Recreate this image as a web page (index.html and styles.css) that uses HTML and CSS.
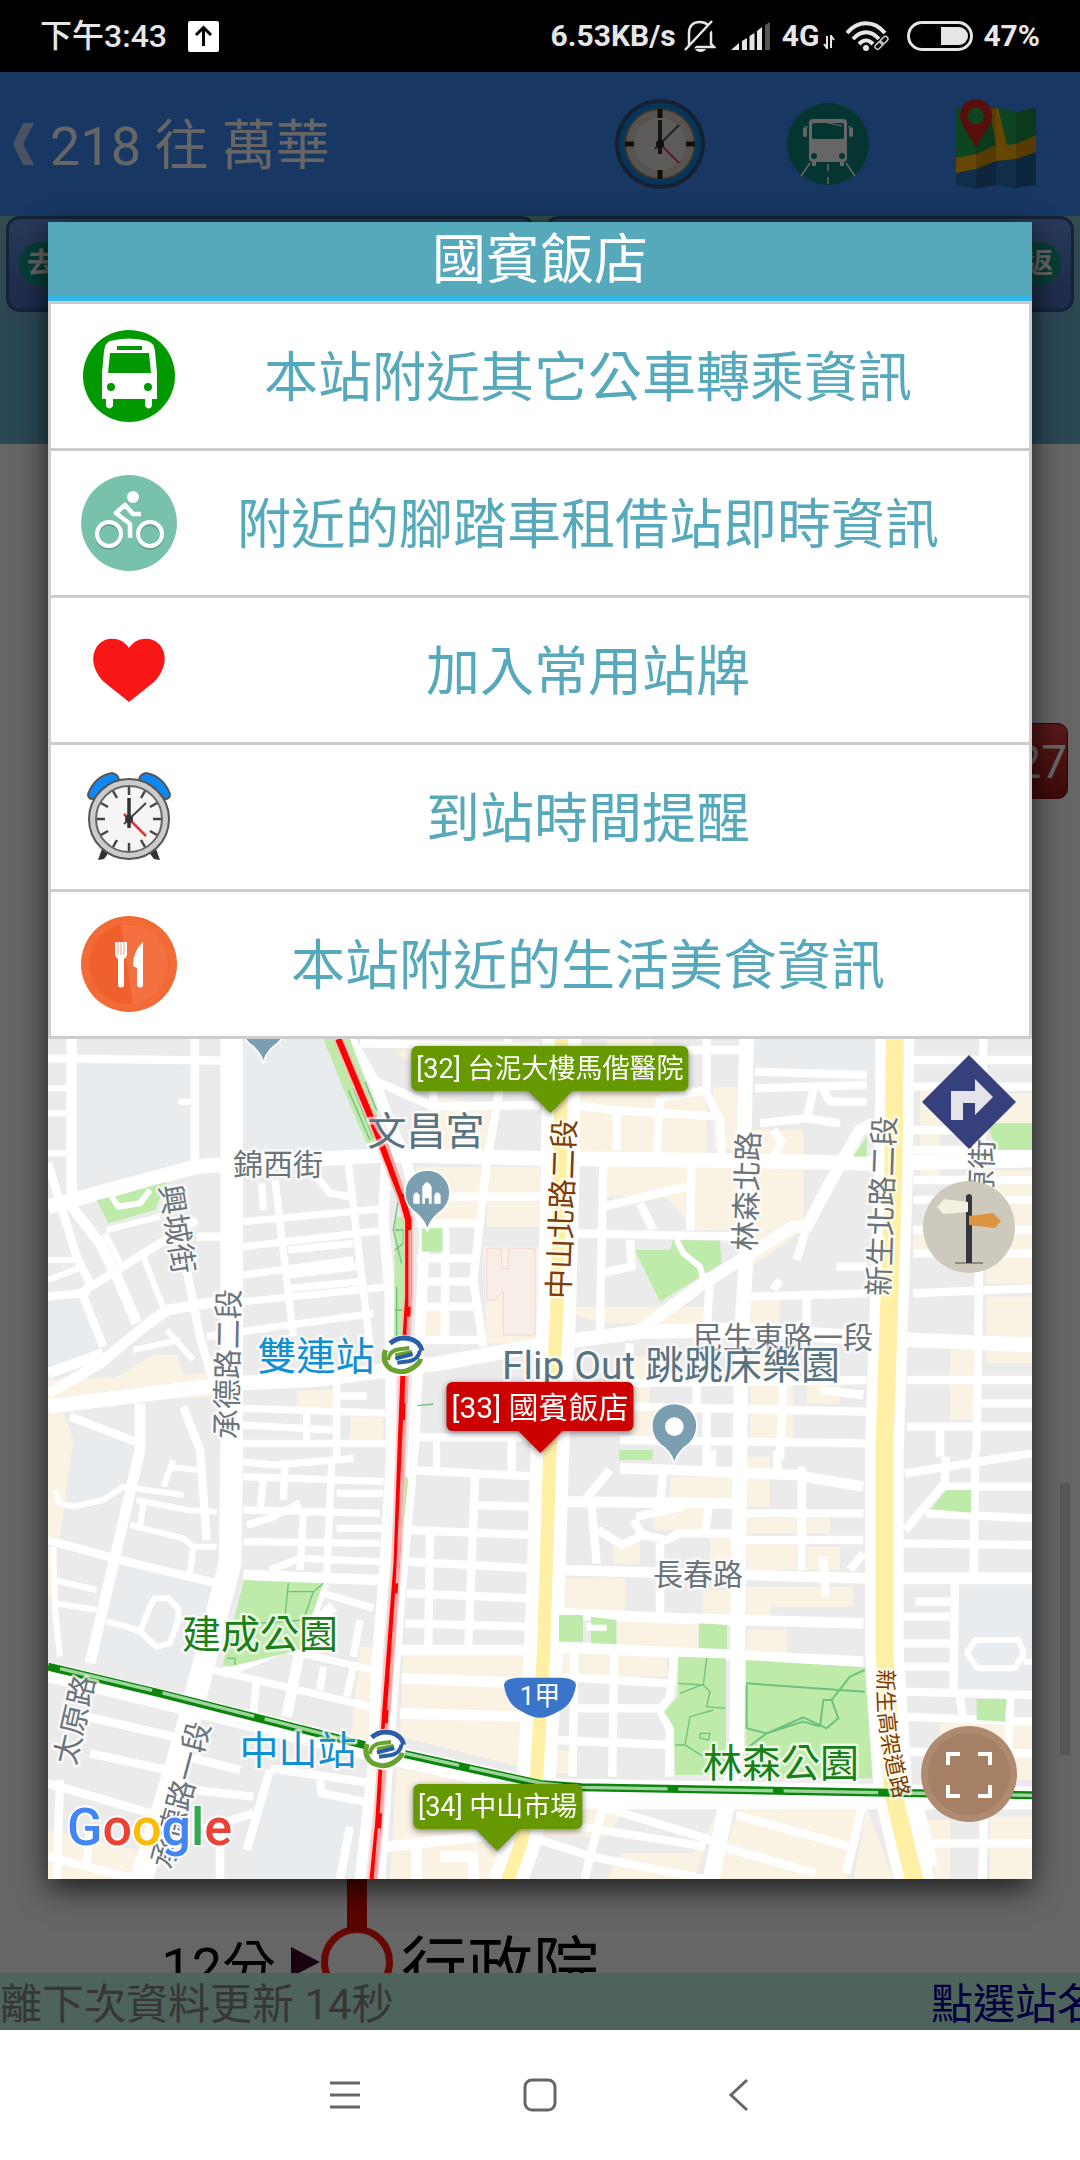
FILE: index.html
```html
<!DOCTYPE html>
<html lang="zh-Hant">
<head>
    <meta charset="UTF-8">
    <meta name="viewport" content="width=device-width, initial-scale=1.0">
    <title>218 往 萬華</title>
    <link rel="stylesheet" href="styles.css">
</head>
<body>
    <div class="status-bar">
        <span class="clock">下午3:43</span>
        <svg class="upload" width="31" height="31" viewBox="0 0 31 31"><rect width="31" height="31" rx="2" fill="#fff"/><path d="M15.500 25V7M8 14l7.500-7.500L23 14" fill="none" stroke="#000" stroke-width="3"/></svg>
        <div class="status-right">
            <span>6.53KB/s</span>
            <svg class="bell" width="32" height="34" viewBox="0 0 32 34"><path d="M5 28V14C5 6 10 3 16 3s11 4 11 11v11l3 3H5" fill="none" stroke="#e6e6e6" stroke-width="2.500"/><path d="M11 30h11c-2 4-9 4-11 0z" fill="#e6e6e6"/><path d="M4 31L31 4" stroke="#000" stroke-width="6"/><path d="M1 31L28 2" stroke="#e6e6e6" stroke-width="2.500"/></svg>
            <svg class="signal" width="39" height="28" viewBox="0 0 39 28"><path d="M0 28l8-7v7zM11 19l5-3v12h-5zM18.500 14l5-3v17h-5zM26 9l5-4v23h-5z" fill="#e6e6e6"/><path d="M34 3l5-3v28h-5z" fill="#555"/></svg>
            <span>4G</span>
            <svg class="updown" width="12" height="14" viewBox="0 0 12 14"><path d="M4 1v12L1 9M8 13V1l3 4" fill="none" stroke="#e6e6e6" stroke-width="2"/></svg>
            <svg class="wifi" width="45" height="30" viewBox="0 0 45 30"><g fill="none" stroke="#e6e6e6" stroke-width="4"><path d="M1 12C12-1 28-1 39 12M7 18c8-9 18-9 26 0M13 23c5-5 9-5 14 0"/></g><circle cx="20" cy="27" r="3" fill="#e6e6e6"/><g fill="none" stroke="#000" stroke-width="4"><rect x="30" y="21" width="9" height="6" rx="3" transform="rotate(-45 34 24)"/></g><g fill="none" stroke="#ccc" stroke-width="1.500"><rect x="29" y="22" width="9" height="5" rx="2.500" transform="rotate(-45 33 25)"/><rect x="34" y="17" width="9" height="5" rx="2.500" transform="rotate(-45 38 20)"/></g></svg>
            <svg class="battery" width="66" height="30" viewBox="0 0 66 30"><rect x="1.500" y="1.500" width="63" height="27" rx="13.500" fill="none" stroke="#e6e6e6" stroke-width="3"/><path d="M34 6h18a9 9 0 0 1 0 18H34z" fill="#e6e6e6"/></svg>
            <span>47%</span>
        </div>
    </div>

    <div class="app">
        <header class="app-header">
            <button class="back" aria-label="返回"><svg width="21" height="42" viewBox="0 0 21 42"><path d="M10 0h11L10 21l11 21H10L0 21z" fill="#b9cdfa"/></svg></button>
            <h1>218 往 萬華</h1>
            <nav class="header-tools">
                <button aria-label="時刻表">
                    <svg width="92" height="92" viewBox="0 0 92 92"><circle cx="46" cy="46" r="45" fill="#39527a"/><circle cx="46" cy="46" r="41" fill="#0b86e6"/><circle cx="46" cy="46" r="36" fill="#8d8275"/><circle cx="46" cy="46" r="34" fill="#d8d0c8"/><circle cx="46" cy="46" r="26" fill="#ebe6e2"/><path d="M46 11v9M46 72v9M11 46h9M72 46h9" stroke="#332211" stroke-width="5"/><path d="M46 56V22" stroke="#333" stroke-width="4"/><path d="M41 51l24-24" stroke="#555" stroke-width="2"/><path d="M46 46l19 19" stroke="#e0404f" stroke-width="2"/><circle cx="46" cy="46" r="4" fill="#222"/></svg>
                </button>
                <button aria-label="公車動態">
                    <svg width="84" height="84" viewBox="0 0 84 84"><circle cx="42" cy="42" r="41" fill="#0c8578"/><rect x="23" y="17" width="38" height="43" rx="4" fill="#fff"/><rect x="26" y="21" width="32" height="16" rx="2" fill="#0c8578"/><path d="M42 21l14 3" stroke="#fff"/><path d="M22 25c-3-1-3 0-3 3M62 25c3-1 3 0 3 3" fill="none" stroke="#fff"/><rect x="17" y="25" width="4" height="10" rx="2" fill="#fff"/><rect x="63" y="25" width="4" height="10" rx="2" fill="#fff"/><circle cx="28" cy="54" r="3" fill="#0c8578"/><circle cx="56" cy="54" r="3" fill="#0c8578"/><path d="M26 60h4v4h-4zM54 60h4v4h-4z" fill="#fff"/><path d="M24 61L15 74M60 61l9 13M42 62v7M42 75v7" stroke="#fff" stroke-width="1.500"/></svg>
                </button>
                <button aria-label="路線地圖">
                    <svg width="82" height="90" viewBox="0 0 82 90"><path d="M1 9l20 3 20-4 20 5 20-4v77l-20 3-20-3-20 4-20-4z" fill="#2870b8"/><path d="M1 9l20 3 20-4 20 5 20-4v29L61 48l-20 5-20 8-20 3z" fill="#1eac52"/><path d="M1 59l20-4 20-9-7-37h9l9 37 9-1 20-9v17l-20 7-20 2-20 8-20 4z" fill="#fdae0c"/><path d="M21 12l20-4v78l-20 4zM61 13l20-4v77l-20 3z" fill="#000" opacity=".15"/><path d="M21 0c-9 0-16 7-16 16 0 13 11 19 16 34 5-15 16-21 16-34C37 7 30 0 21 0z" fill="#d9271f"/><circle cx="21" cy="17" r="8" fill="#1eac52"/></svg>
                </button>
            </nav>
        </header>

        <div class="tabs">
            <button class="tab"><span class="tab-mark">去</span></button>
            <button class="tab tab-end"><span class="tab-mark">返</span></button>
        </div>

        <main class="stop-list">
            <div class="stop stop-plate"><span class="plate">27</span></div>
            <div class="stop stop-next">
                <span class="time">12分</span>
                <svg class="arrow" width="29" height="30" viewBox="0 0 29 30"><path d="M0 0l29 15L0 30z" fill="#40002f"/></svg>
                <span class="node"></span>
                <span class="stop-name">行政院</span>
            </div>
            <div class="scrollbar"></div>
        </main>

        <footer class="update-bar">
            <span>離下次資料更新 14秒</span>
            <span class="hint">點選站名</span>
        </footer>

        <div class="scrim">
            <section class="dialog" role="dialog" aria-labelledby="dialog-title">
                <h2 id="dialog-title">國賓飯店</h2>
                <ul class="options">
                    <li><button class="option">
                        <svg width="96" height="96" viewBox="0 0 96 96"><circle cx="48" cy="48" r="46" fill="#090"/><path d="M29 13q19-5 38 0 6 2 7 10l2 22v26h-5v7q-3 5-7 0v-7H32v7q-4 5-7 0v-7h-4V45l2-22q1-8 6-10z" fill="#fff"/><path d="M36 18h25v4H36zM29 25h39l2 20H27z" fill="#090"/><circle cx="30" cy="59" r="4" fill="#090"/><circle cx="67" cy="59" r="4" fill="#090"/></svg>
                        <span>本站附近其它公車轉乘資訊</span></button></li>
                    <li><button class="option">
                        <svg width="96" height="96" viewBox="0 0 96 96"><circle cx="48" cy="48" r="48" fill="#78c2ad"/><g fill="none" stroke="#000" stroke-opacity=".15" stroke-width="4"><circle cx="28" cy="61" r="12"/><circle cx="69" cy="61" r="12"/></g><g fill="none" stroke="#fff" stroke-width="4"><circle cx="28" cy="59" r="12"/><circle cx="69" cy="59" r="12"/><path d="M60 39h-8l-8-9-9 8 14 11v14" stroke-width="4.500" stroke-linejoin="round"/></g><circle cx="52" cy="22" r="6" fill="#fff"/></svg>
                        <span>附近的腳踏車租借站即時資訊</span></button></li>
                    <li><button class="option">
                        <svg width="96" height="96" viewBox="0 0 96 96"><path d="M48 26c7-11 22-12 30-4 10 11 6 27-5 38L48 80 23 60C12 49 8 33 18 22c8-8 23-7 30 4z" fill="#f81616"/></svg>
                        <span>加入常用站牌</span></button></li>
                    <li><button class="option">
                        <svg width="96" height="96" viewBox="0 0 96 96"><path d="M7 25Q14 7 31 4q6 1 7 7L12 30q-5 0-5-5zM89 25Q82 7 65 4q-6 1-7 7l26 19q5 0 5-5z" fill="#0d88f5" stroke="#555" stroke-width="2"/><path d="M22 77l-5 14 6-1 9-12zM74 77l5 14-6-1-9-12z" fill="#333"/><circle cx="48" cy="50" r="40" fill="#ccc" stroke="#555" stroke-width="2"/><circle cx="48" cy="50" r="33" fill="#f5f5f5" stroke="#666" stroke-width="2"/><g stroke="#444" stroke-width="2.500"><path d="M48 18v8M48 82v-8M16 50h8M80 50h-8M32 22l4 7M64 22l-4 7M32 78l4-7M64 78l-4-7M20 34l7 4M20 66l7-4M76 34l-7 4M76 66l-7-4"/></g><path d="M48 59V29" stroke="#333" stroke-width="3.500"/><path d="M43 55l22-21" stroke="#444" stroke-width="2"/><path d="M43 45l22 22" stroke="#e8303c" stroke-width="2.500"/><circle cx="48" cy="50" r="4" fill="#333"/></svg>
                        <span>到站時間提醒</span></button></li>
                    <li><button class="option">
                        <svg width="96" height="96" viewBox="0 0 96 96"><circle cx="48" cy="48" r="48" fill="#f26a35"/><circle cx="48" cy="48" r="40" fill="#f0602c"/><path d="M40 9q8-1 20 1a40 40 0 0 1 0 76q-8 2-8 2z" fill="#f47040"/><path d="M34 26h12v13q-1 3-3 4v27q-3 3-6 0V43q-2-1-3-4zM62 26v44q-3 3-6 0V52l-4-2q0-15 10-24z" fill="#fff"/><path d="M37 26v13M40 26v13M43 26v13" stroke="#f0a080"/></svg>
                        <span>本站附近的生活美食資訊</span></button></li>
                </ul>

                <div class="map">
                    <svg class="map-art" viewBox="0 0 984 840" preserveAspectRatio="xMidYMid slice">
                        <rect width="984" height="840" fill="#ebebeb"/>
                        <!-- drawn at three times the label scale -->
                        <g transform="scale(.33333) translate(-24 -27)">
                            <g fill="#e8ecef">
                                <path d="M110 105H450V390L110 470zM615 27H860L1000 370 615 390zM24 810H130L185 960 24 1020zM90 1230H290L250 1370 90 1420 60 1400zM240 1605L530 1670 440 1975 180 1880zM690 2225L840 2265V2300L995 2340 950 2547H630z"/>
                                <path d="M2140 27H2485V145H2140zM2765 1665H2976V1975H2753z"/>
                            </g>
                            <g fill="#faf2e2">
                                <path d="M24 1050L500 1030 540 1100 24 1120zM24 1150H70L100 1230 60 1520H24zM340 975H410L440 1060H200zM770 1080H880V1130H770zM930 1160H1030V1230H930zM1170 200L1350 220 1340 380H1120zM1060 60H1180V150zM1130 410H1330V580H1130zM1345 410H1500V590H1340zM1330 650H1500V940H1340zM1140 835H1220V930H1140z"/>
                                <path d="M1090 1870H1460L1440 2210 1080 2120zM960 1850H1010L990 2150H930zM1070 2215L1440 2290V2547H1050zM24 2400L330 2470V2547H24zM24 1550H50V1700H24z"/>
                                <path d="M1620 170H2000V370H1620zM1700 27H1840V120H1700zM2020 170H2100V360H2020zM1700 400H2100V600H1960L1880 500H1700zM2130 300H2290V600L2150 700H2130zM1500 830H2000V880H1700zM2130 810H2220V890H2130zM1740 980H1830V1120H1740zM2130 980H2260V1240H2130zM1740 1140H1970V1220H1780zM2300 980H2400V1120H2300z"/>
                                <path d="M2640 180H2700V440H2640zM2840 420H2976V760H2840zM2840 190H2976V280H2840zM2620 600H2800V660H2620zM2730 960H2800V1170H2730zM2840 800H2976V1000H2840z"/>
                                <path d="M1890 1340H2080V1410H1890zM2120 1280H2190V1430H2120zM1840 1430H1990V1500H1840zM1720 1540H1800V1600H1720zM2010 1500H2080V1600H2010zM2120 1465H2370V1510H2120zM2120 1540H2270V1620H2120zM2300 1550H2400V1620H2300zM1565 1645H1755V1740H1565zM1990 1680H2080V1760H1990zM2120 1670H2440V1730H2190V1760H2120zM1730 1770H1975V1860H1730zM2120 1800H2240V1870H2120zM1550 1860H1590V1950H1550zM1615 1865H1880V1940H1615zM1540 2160H1590V2230H1540z"/>
                                <path d="M1500 2320H1770L1700 2420H1500zM1740 2470H1960L2040 2340 1960 2547H1700zM2100 2320H2460L2420 2547H2030zM2480 2330L2560 2547H2440zM2640 2370H2730V2547H2660zM2850 2360H2976V2547H2850zM2700 2080H2976V2250H2700z"/>
                            </g>
                            <g class="road">
                                <path class="w66" d="M575 0V1260L570 1600 505 1850 440 2100 380 2300 300 2560"/>
                                <path class="w40" d="M24 530L470 410 600 400 1040 375 1500 385 2100 392 2500 400 2976 390M24 1130L580 1060 820 1050 1200 1000 1500 945 1800 905 2100 900 2500 925 2976 945"/>
                                <path class="w30" d="M95 27V500M95 530L180 640 240 760 290 880M300 1120V1260L230 1560 150 1900M24 1090L180 1000 300 900 380 840 560 810M24 1030L190 970"/>
                                <path class="w24" d="M24 85L560 92M465 27V400M24 400L110 680 150 760 130 800 190 950M24 800L120 790 360 640 470 570M470 620H560M440 720L480 920 520 1060M430 1130L480 1260 500 1530M90 1160L300 1240"/>
                                <path class="w18" d="M415 215H460M24 175H90M24 250H90M24 370H90M24 690H110M24 750L130 710M195 610L240 700M310 680L380 860M200 600L360 560M280 960L420 930M380 900L460 990"/>
                                <path class="w20" d="M610 575L1040 535M610 650L1040 600M610 735L940 690M745 660L940 640M745 735L950 710M750 775L960 755M610 815L1050 770M500 920L1000 850M665 460L670 540M705 450L760 920M925 400L990 950M830 440L870 490 930 500"/>
                                <path class="w30" d="M1040 380L1030 560 1050 800V940L1055 1260 1035 1600 1010 1900 1000 2200 960 2547M930 27L1000 150 1100 400 1155 600 1140 900 1120 1260 1080 1700 1050 2100 1020 2547"/>
                                <path class="w24" d="M960 40L1500 50M1000 150L1180 230 1500 225M1180 130V220M1405 27L1340 400 1300 750 1330 950M1110 500H1500M1130 580H1320M1130 685H1310M1140 755H1300M1130 830H1320M1215 590V930M1130 930H1320M1120 1222H1500"/>
                                <path class="w20" d="M610 1135L1060 1150M610 1185L880 1200M890 1050V1290M800 1150V1230M900 1098H980M610 1240H1060M1190 1220V1320M610 1295L700 1305 940 1285M610 1340L1030 1355M670 1350L660 1440M735 1310L730 1410M610 1440L1020 1450M620 1485L690 1465 780 1420M875 1300L860 1640M790 1450L780 1620M610 1535L1020 1540M890 1390H1030M890 1495H1030M690 1620L780 1585 1020 1595M850 1690L1000 1735M740 1860L1000 1920M520 1920L990 2030M650 1940L640 2050M850 1910L840 1980M940 1910L920 2000M960 1770L940 1880"/>
                                <path class="w30" d="M610 1635L1020 1650M850 1660L780 1860 740 2060M550 1930L740 1850 880 1730"/>
                                <path class="w18" d="M45 1380L60 1420 100 1430 190 1410 250 1370 430 1395M290 1410L440 1440 530 1445M310 1420L300 1490M270 1485L430 1525 460 1550H530M460 1550L450 1630M400 1290L370 1370M390 1310L470 1320M40 1550L45 1740 60 1880M40 1650L170 1680M45 1720L170 1740M200 1775L260 1790 300 1805M330 1730L345 1705H385L415 1735V1770L390 1840 350 1850 300 1805z"/>
                                <path class="w24" d="M24 1530L240 1590 530 1660M140 2060L400 2120M150 2170L380 2220M24 2260L400 2370M60 2250L50 2547M24 2480L300 2550M440 2180L600 2220M690 2220L620 2460M460 2280L640 2300M690 2215L1000 2260M840 2250L845 2290 1000 2320M930 2390L900 2547M480 2400L640 2350M540 2380V2547M150 2400L140 2500"/>
                                <path class="w24" d="M1170 1500L1165 1850M1305 1340L1285 1850M1110 1320L1500 1340M1300 1425L1480 1430M1100 1500L1480 1515M1105 1595L1480 1615M1100 1690L1470 1705M1095 1780L1470 1790M1415 1220V1340"/>
                                <path class="w30" d="M1080 1860H1470M1085 1945L1470 1960M1080 2050L1460 2060M1040 2450L1500 2400M1130 2430V2547M1200 2480H1300V2547"/>
                                <path class="w100" d="M1565 0L1560 450 1550 850 1530 1260 1510 1880 1490 2240 1440 2450 1400 2560M2565 0L2560 450 2545 900 2533 1260V1860L2560 2290 2625 2560"/>
                                <path class="w40" d="M2120 27L2110 400 2120 660 2105 900 2100 1260 2090 2140 2068 2300 2016 2547"/>
                                <path class="w34" d="M1800 900L1990 760 2260 590H2300L2380 440 2460 300 2500 280"/>
                                <path class="w24" d="M2000 27V190L2040 270 2045 370M1610 225L1710 240 2040 260M1730 250V360M1860 200L1850 370M1860 205L2000 180M1940 60H2120M2145 125L2480 135M2145 175L2480 165M2320 180L2300 270M2350 180L2370 215H2480M2160 280L2300 265 2400 280M2200 300L2225 335 2200 380"/>
                                <path class="w24" d="M1690 400L1680 900M1955 400L1950 600M1690 530L1940 470M1800 520L1840 600M1600 610L2100 620M1770 630L1775 710 1680 730M1910 630L1930 670 1980 710 1990 740M2010 750L2000 900M2300 590L2270 690M2130 800L2480 790M2300 800V880M2390 710H2480M2220 750L2200 780"/>
                                <path class="w24" d="M2830 27L2820 500 2810 1260M2620 90H2976M2620 170H2976M2620 300H2840M2620 450H2976M2620 510H2976M2620 600H2976M2620 670H2976M2620 790L2976 775M2600 1050H2976M2600 1190H2976M2700 1190V1280M2820 1120H2976M2620 360H2976"/>
                                <path class="w24" d="M1770 940L1760 1060M1760 1130L2480 1145M1970 1060V1130M2230 1050L2220 1290M1740 1230L2480 1240M2340 1080L2470 1095M1740 1060L2480 1050M1860 1140V1230M2000 1140V1310"/>
                                <path class="w30" d="M1740 1315L1900 1320 2265 1335 2470 1370M1560 1415L2080 1420M1560 1620L2480 1645M1560 1750L1910 1765 2470 1780M1540 1850L2470 1895"/>
                                <path class="w24" d="M2115 1450H2470M2115 1530H2470M1675 1500L1745 1545 1810 1515 1880 1530 1915 1510H2080M1790 1460L1930 1430M1780 1470L1810 1520M1635 1410L1710 1320M1655 1430L1670 1600M1870 1320L1860 1420M1860 1540V1750M2285 1310V1620M2350 1580L2357 1700M2006 1430L1995 1510M2430 1620L2470 1570M2016 1260V1320M2212 1260V1320"/>
                                <path class="w24" d="M1603 1860L1598 2240M1722 1860L1717 2240M1550 1940L1890 1960M1614 2035H1860M1540 2130L1890 2145M1903 1880L1890 2000 1860 2040 1890 2100 1887 2240M1640 1790H1700"/>
                                <path class="w24" d="M2595 1330L2976 1270M2718 1280L2714 1360 2595 1500M2806 1260L2801 1640M2710 1370H2976M2657 1450L2976 1465M2590 1540L2976 1545M2590 1760H2730M2590 1840H2730M2590 1910H2730M2585 1985L2976 1995M2745 1660L2740 2000M2626 1715H2730M2590 2060L2976 2075M2910 2000L2905 2160M2760 2000L2770 2080M2600 2165L2976 2170M2832 2360L2827 2547M2657 2440H2976"/>
                                <path class="w18" d="M2781 1870L2807 1830H2936L2951 1870 2925 1915H2812zM2951 1895H2976"/>
                                <path class="w34" d="M2590 1645H2976M2058 2300L2006 2547M2533 2310L2585 2547M2626 2300L2677 2510M1500 2320H2976"/>
                                <path class="w24" d="M1696 2300L1634 2547M1500 2370L1996 2450M1686 2330L2047 2440M1500 2430L1655 2480 1996 2547M2089 2355L2430 2450M2047 2450L2326 2530M2471 2310L2419 2530"/>
                                <path class="w50" d="M24 1925L460 2030 980 2160 1500 2275 2976 2300"/>
                            </g>
                            <g fill="none" stroke="#fff0a6">
                                <path stroke-width="40" d="M1565 0L1560 450 1550 850 1530 1260 1510 1880 1490 2240 1440 2450 1400 2560"/>
                                <path stroke-width="54" d="M2565 0L2560 450 2545 900 2533 1260V1860L2560 2290 2625 2560"/>
                            </g>
                            <path d="M1340 655h45v60h20v-60h80v260h-95v-130l-25 25h-25z" fill="#f7eeea" stroke="#f3d6d4" stroke-width="3"/>
                            <g fill="#bfebaa">
                                <path d="M170 510L220 500 310 475 380 455 345 540 205 580zM850 27H930L1010 240 1020 340H980L920 200zM1145 595H1208V665H1145zM1065 560H1118V800L1090 925H1062zM612 1650L850 1660 780 1860 570 1910 548 1905zM1090 1325L1105 1350 1090 1495H1078z"/>
                                <path d="M1785 660H1890L1900 630 2040 632 2045 700 1860 815zM2480 320L2440 380H2480zM2840 280H2976V360H2870zM1738 1260H1838V1290H1738z"/>
                                <path d="M1557 1755H1629V1835H1557zM1653 1760L1729 1770V1843L1653 1838zM1977 1780L2061 1785V1857L1977 1853zM1915 1880L2058 1885V2235H1906L1901 2090 1872 2045 1913 2000zM2118 1890L2474 1912 2497 2245H2118zM2719 1380H2793V1448L2672 1438zM2810 2007H2900L2895 2075 2810 2070z"/>
                            </g>
                            <path class="road w18" d="M1910 630L1930 670 1980 710 1990 745M215 500L235 530 300 520 330 480M1653 1793H1700"/>
                            <g class="trail">
                                <path d="M2118 1960L2474 1985M2120 1965V2095L2180 2110 2290 2062 2360 2095 2395 2065 2375 2010 2430 1940 2474 1920M2180 2110L2120 2155M2180 2110L2290 2075 2340 2090M2340 2090L2350 2010 2375 2010"/>
                            </g>
                            <g class="trail thin">
                                <path d="M1915 1960L1990 1965 2000 1885M1990 1965L2010 1985 2000 2030 2055 2035M1920 1990L1985 1965M1935 2145L1950 2060 2020 2040M1906 2145H1935L1990 2180M1980 2110H2010L2005 2130 1980 2125zM745 1660L735 1760M745 1685H820L850 1660M820 1685L790 1770 650 1780M560 1885H585V1905"/>
                                <path d="M975 155L1010 240M925 180L990 330M940 175L1000 325M1045 430L1075 510 1060 600 1085 700M1070 770V930M1065 840H1110M1132 1127L1180 1122M1065 600H1090V640L1065 660"/>
                            </g>
                            <path d="M895 27L1000 280 1085 500 1105 570V800L1092 1000 1082 1260 1070 1600 1035 2060 1015 2380 998 2547" fill="none" stroke="#fbb" stroke-width="32" stroke-opacity=".7"/>
                            <path d="M895 27L1000 280 1085 500 1105 570V800L1092 1000 1082 1260 1070 1600 1035 2060 1015 2380 998 2547" fill="none" stroke="#f00" stroke-width="19"/>
                            <path d="M1004 255L1032 320 1092 490M1110 600V830M1106 860L1098 1120M1094 1170L1086 1350 1072 1660M1070 1690L1046 2040M1040 2080L1024 2350M1018 2395L1006 2547" fill="none" stroke="#f8a8a8" stroke-width="10"/>
                            <path d="M24 1910L360 1990 980 2147 1500 2262 1624 2272 2976 2296" fill="none" stroke="#0b850b" stroke-width="24"/>
                            <path d="M60 1916L360 1987 980 2145 1500 2259 1624 2272 2976 2296" fill="none" stroke="#9fd49f" stroke-width="10" stroke-dasharray="284 32"/>
                            <g id="metro">
                                <circle cx="1090" cy="976" r="62" fill="#fff"/>
                                <g fill="none">
                                    <path d="M1050 940q25-22 58-14 32 8 38 36" stroke="#2b5ea8" stroke-width="15"/>
                                    <path d="M1036 960q-12 38 18 58 38 18 72-10 14-12 16-22" stroke="#69a22d" stroke-width="15"/>
                                    <path d="M1044 990q6-30 34-32l30-4M1066 976l50-10" stroke="#69a22d" stroke-width="12"/>
                                    <path d="M1140 962q-6 28-34 32l-34 4M1118 972l-52 14" stroke="#2b5ea8" stroke-width="12"/>
                                </g>
                            </g>
                            <use href="#metro" x="-55" y="1182"/>
                            <g fill="#7b9fb0" stroke="#fff" stroke-width="5">
                                <path id="pin" d="M1162 605q-4-28-30-52-38-25-38-65a68 68 0 0 1 136 0q0 40-38 65-26 24-30 52z"/>
                                <use href="#pin" x="741" y="700"/>
                                <use href="#pin" x="-492" y="-503"/>
                            </g>
                            <path d="M1147 521v-50q14-28 28 0v50h-8v-16h-12v16zM1120 521v-25q9-18 19 0v25zM1183 521v-25q9-18 19 0v25z" fill="#fff"/>
                            <circle cx="1903" cy="1190" r="28" fill="#fff"/>
                            <path d="M1392 1965q2-20 45-22h126q43 2 45 22-8 60-55 80-30 18-53 18t-53-18q-47-20-55-80z" fill="#3a75c9"/>
                        </g>

                        <g class="label street">
                            <text x="230" y="125">錦西街</text>
                            <text x="735" y="298">民生東路一段</text>
                            <text x="650" y="535">長春路</text>
                            <text transform="translate(129 190) rotate(81)">興城街</text>
                            <text transform="translate(180 325) rotate(-89)">承德路二段</text>
                            <text transform="translate(27 681) rotate(-77)">太原路</text>
                            <text transform="translate(133 756) rotate(-75)">承德路一段</text>
                            <text transform="translate(699 152) rotate(-88)">林森北路</text>
                            <text transform="translate(834 167) rotate(-88)">新生北路二段</text>
                            <text transform="translate(934 130) rotate(-88)">原街</text>
                            <text class="highway" transform="translate(514 170) rotate(-88)">中山北路二段</text>
                        </g>
                        <path id="viaduct" d="M830 630C829 670 830 700 849 768" fill="none"/>
                        <text class="label viaduct"><textPath href="#viaduct">新生高架道路</textPath></text>
                        <g class="label place">
                            <text x="378" y="93">文昌宮</text>
                            <text x="623" y="327">Flip Out 跳跳床樂園</text>
                            <text class="station" x="268" y="318">雙連站</text>
                            <text class="station" x="250" y="712">中山站</text>
                            <text class="park" x="212" y="596">建成公園</text>
                            <text class="park" x="733" y="725">林森公園</text>
                        </g>
                        <text class="shield" x="492" y="657">1甲</text>
                        <text class="google" x="19" y="806"><tspan fill="#4285f4">G</tspan><tspan fill="#ea4335">o</tspan><tspan fill="#fbbc05">o</tspan><tspan fill="#4285f4">g</tspan><tspan fill="#34a853">l</tspan><tspan fill="#ea4335">e</tspan></text>
                    </svg>

                    <span class="callout prev">[32] 台泥大樓馬偕醫院</span>
                    <span class="callout current">[33] 國賓飯店</span>
                    <span class="callout next">[34] 中山市場</span>

                    <div class="map-tools">
                        <button aria-label="導航"><svg width="96" height="96" viewBox="0 0 96 96"><path d="M48 1l47 47-47 47L1 48z" fill="#36407d"/><path d="M30 66V37h24V25l18 18-18 18V49H42v17z" fill="#e4e4ea"/></svg></button>
                        <button class="street-view" aria-label="街景"><svg width="96" height="96" viewBox="0 0 96 96"><circle cx="48" cy="48" r="46" fill="#cdc9bd"/><path d="M34 84h28" stroke="#777" stroke-width="1.500"/><path d="M45 17q3-4 6 0v67h-6z" fill="#33373c"/><path d="M47 23l-24-3-7 8 6 7 25-2z" fill="#f2f0e0"/><path d="M48 37l24-3 8 8-6 7-26-3z" fill="#dd9440"/></svg></button>
                        <button class="fullscreen" aria-label="全螢幕"><svg width="96" height="96" viewBox="0 0 96 96"><circle cx="48" cy="48" r="48" fill="#ad8a70"/><circle cx="48" cy="48" r="41" fill="#a58064"/><path d="M27 39V28h12M57 28h12v11M69 59v11H57M39 70H27V59" fill="none" stroke="#fff" stroke-width="4"/></svg></button>
                    </div>
                </div>
            </section>
        </div>
    </div>

    <nav class="system-nav">
        <button aria-label="選單"><svg width="32" height="32" viewBox="0 0 32 32"><path d="M1 4h30M1 16h30M1 28h30" stroke="#666" stroke-width="3"/></svg></button>
        <button aria-label="主畫面"><svg width="34" height="34" viewBox="0 0 34 34"><rect x="2" y="2" width="30" height="30" rx="7" fill="none" stroke="#666" stroke-width="3"/></svg></button>
        <button aria-label="上一頁"><svg width="32" height="34" viewBox="0 0 32 34"><path d="M28 2L12 17l16 15" fill="none" stroke="#666" stroke-width="3"/></svg></button>
    </nav>
</body>
</html>
```
FILE: styles.css
```css
* {
    box-sizing: border-box;
}
body {
    margin: 0;
    min-height: 100vh;
    display: flex;
    flex-direction: column;
    font-family: Roboto, "Noto Sans CJK TC", sans-serif;
    background: #fff;
}
h1, h2, ul {
    margin: 0;
    padding: 0;
    font-weight: 400;
    list-style: none;
}
button {
    padding: 0;
    border: none;
    background: none;
    font: inherit;
    color: inherit;
    cursor: pointer;
}
svg {
    display: block;
    flex: none;
}

/* status bar */
.status-bar {
    height: 72px;
    padding: 0 40px;
    display: flex;
    align-items: center;
    background: #000;
    color: #e6e6e6;
    font-weight: 700;
    line-height: 40px;
}
.clock {
    font-size: 32px;
    font-weight: 500;
}
.upload {
    margin-left: 21px;
}
.status-right {
    margin-left: auto;
    display: flex;
    align-items: center;
    font-size: 30px;
}
.bell {
    margin: 0 15px 0 8px;
}
.signal {
    margin-right: 12px;
}
.updown {
    margin: 12px 11px 0 4px;
}
.battery {
    margin: 0 10px 0 16px;
}

/* page behind the dialog */
.app {
    flex: 1;
    position: relative;
    display: flex;
    flex-direction: column;
    overflow: hidden;
}
.app-header {
    height: 144px;
    padding: 0 38px 0 13px;
    display: flex;
    align-items: center;
    background: #3c8cf7;
    color: #fff;
}
.app-header h1 {
    margin-left: 16px;
    padding-top: 6px;
    font-size: 54px;
    line-height: 72px;
}
.header-tools {
    margin-left: auto;
    display: flex;
    align-items: center;
    gap: 76px;
}
.header-tools button {
    width: 92px;
    display: flex;
    justify-content: center;
}
.tabs {
    height: 228px;
    padding: 0 6px;
    display: flex;
    align-items: flex-start;
    gap: 10px;
    background: linear-gradient(#7cc0b8, #69b1d2 50%);
}
.tab {
    flex: 1;
    height: 96px;
    padding: 0 10px;
    display: flex;
    align-items: center;
    border: 3px solid #37558f;
    border-radius: 14px;
    background: linear-gradient(#6592e0, #4a69b5);
    color: #fff;
}
.tab-end {
    justify-content: flex-end;
}
.tab-mark {
    width: 44px;
    height: 44px;
    border-radius: 50%;
    background: #12998c;
    font-size: 28px;
    font-weight: 700;
    line-height: 44px;
}
.stop-list {
    flex: 1;
    position: relative;
    padding-top: 279px;
    display: flex;
    flex-direction: column;
    justify-content: space-between;
    overflow: hidden;
    background: #fff;
}
.stop {
    display: flex;
    align-items: center;
}
.stop-plate {
    justify-content: flex-end;
    padding-right: 12px;
}
.plate {
    width: 150px;
    height: 76px;
    border-radius: 10px;
    border: 1px solid #8a1010;
    background: linear-gradient(#d83c3c, #c03030 40%, #a01818);
    color: #fff;
    font-size: 46px;
    line-height: 76px;
    text-align: right;
}
.stop-next {
    height: 90px;
    margin-bottom: -34px;
    color: #000;
}
.time {
    width: 276px;
    font-size: 54px;
    text-align: right;
}
.arrow {
    margin: 0 1px 0 15px;
}
.node {
    position: relative;
    width: 72px;
    height: 72px;
    border: 7px solid #ff160c;
    border-radius: 50%;
}
.node::before {
    content: "";
    position: absolute;
    left: 19px;
    bottom: 60px;
    width: 20px;
    height: 200px;
    background: #e00b00;
}
.stop-name {
    margin-left: 8px;
    font-size: 66px;
}
.scrollbar {
    position: absolute;
    right: 10px;
    bottom: 218px;
    width: 10px;
    height: 272px;
    background: #dadada;
}
.update-bar {
    position: relative;
    height: 57px;
    padding-top: 3px;
    display: flex;
    justify-content: space-between;
    background: #c3f7e3;
    color: #888;
    font-size: 42px;
    line-height: 57px;
    white-space: nowrap;
}
.hint {
    margin-right: -19px;
    color: #0000a0;
}

/* dialog */
.scrim {
    position: absolute;
    inset: 0;
    padding: 0 48px 2px;
    display: flex;
    align-items: center;
    background: rgba(0, 0, 0, 0.6);
}
.dialog {
    flex: 1;
    min-width: 0;
    background: #fff;
    box-shadow: 0 10px 28px rgba(0, 0, 0, 0.7);
}
.dialog h2 {
    padding-top: 4px;
    border-bottom: 6px solid #33b5e5;
    background: #56a9ba;
    color: #fff;
    font-size: 54px;
    line-height: 69px;
    text-align: center;
}
.options {
    border: 3px solid #ccc;
}
.options li + li {
    border-top: 3px solid #ccc;
}
.option {
    width: 100%;
    height: 144px;
    padding: 0 30px;
    display: flex;
    align-items: center;
    color: #56a9ba;
    font-size: 54px;
    line-height: 72px;
}
.option span {
    flex: 1;
    padding-top: 6px;
    text-align: center;
}

/* map */
.map {
    position: relative;
    height: 840px;
    overflow: hidden;
}
.map-art {
    width: 100%;
    height: 100%;
}
.road {
    fill: none;
    stroke: #fff;
    stroke-linejoin: round;
}
.w18 { stroke-width: 18; }
.w20 { stroke-width: 22; }
.w24 { stroke-width: 25; }
.w30 { stroke-width: 32; }
.w34 { stroke-width: 36; }
.w40 { stroke-width: 44; }
.w50 { stroke-width: 60; }
.w66 { stroke-width: 68; }
.w100 { stroke-width: 116; }
.trail {
    fill: none;
    stroke: #6fc17f;
    stroke-width: 6;
}
.thin {
    stroke-width: 4;
}
.label {
    paint-order: stroke;
    stroke: rgba(255, 255, 255, 0.7);
    stroke-width: 5px;
    stroke-linejoin: round;
}
.street, .place, .shield {
    text-anchor: middle;
    dominant-baseline: central;
}
.street {
    font-size: 30px;
    fill: #6b747b;
}
.highway, .viaduct {
    fill: #7d3c08;
}
.viaduct {
    font-size: 22px;
}
.place {
    font-size: 39px;
    fill: #587380;
}
.station {
    fill: #0f8fd4;
}
.park {
    fill: #188018;
}
.shield {
    font-size: 26px;
    fill: #fff;
}
.google {
    font-size: 52px;
    font-weight: 500;
    paint-order: stroke;
    stroke: #fff;
    stroke-width: 4px;
}
.callout {
    position: absolute;
    padding: 2px 5px 0;
    border-radius: 6px;
    background: #690;
    color: #fff;
    font-size: 27px;
    line-height: 43px;
    white-space: nowrap;
    transform: translateX(-50%);
    filter: drop-shadow(0 2px 3px rgba(0, 0, 0, 0.5));
}
.callout::after {
    content: "";
    position: absolute;
    top: 100%;
    left: 50%;
    margin-left: -22px;
    border: 22px solid transparent;
    border-top-color: #690;
    border-bottom: none;
}
.prev {
    left: 51%;
    top: 7px;
}
.current {
    left: 50%;
    top: 343px;
    background: #c00;
    font-size: 30px;
    line-height: 47px;
}
.current::after {
    border-top-color: #c00;
}
.next {
    left: 45.7%;
    top: 745px;
}
.map-tools {
    position: absolute;
    top: 15px;
    right: 15px;
    bottom: 57px;
    display: flex;
    flex-direction: column;
}
.street-view {
    margin-top: 29px;
}
.fullscreen {
    margin-top: auto;
}

.system-nav {
    height: 130px;
    display: flex;
    align-items: center;
    justify-content: center;
    gap: 162px;
    background: #fff;
}
```
